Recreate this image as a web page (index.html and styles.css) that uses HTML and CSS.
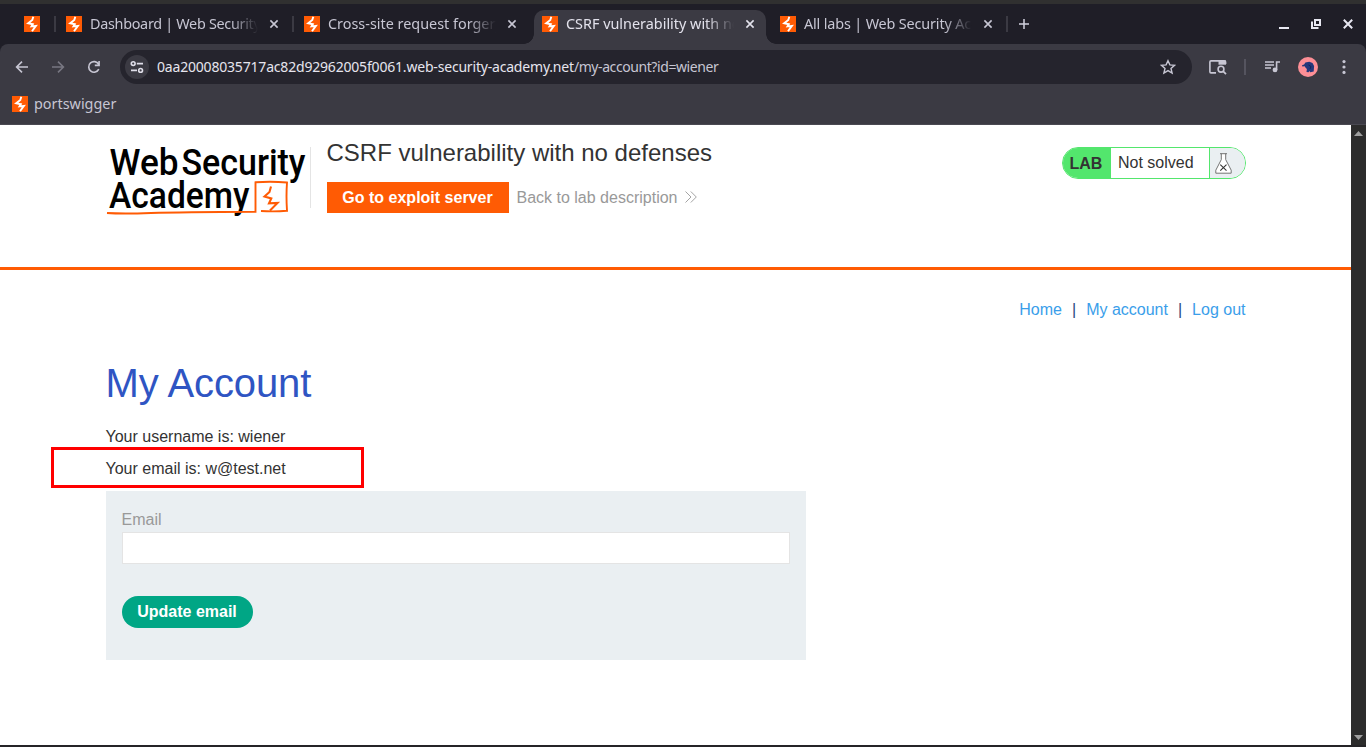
FILE: index.html
```html
<!DOCTYPE html>
<html lang="en">
<head>
<meta charset="utf-8">
<title>CSRF vulnerability with no defenses</title>
<link rel="stylesheet" href="styles.css">
</head>
<body>
<svg width="0" height="0" class="defs" aria-hidden="true">
  <symbol id="fav" viewBox="0 0 16 16"><rect width="16" height="16" fill="#ff5b04"/><path d="M9.300 .8 8.300 4 4.200 7.200 8.800 8.200 7.500 10.400 11.900 9.900 8 15.300" fill="none" stroke="#fff" stroke-width="1.900"/></symbol>
  <symbol id="close" viewBox="0 0 10 10"><path d="M1.4 1.4 8.6 8.6M8.6 1.4 1.4 8.6" stroke="currentColor" stroke-width="1.6" fill="none"/></symbol>
</svg>
<div class="desktop-strip"></div>
<div class="tabstrip">
  <div class="tab pinned"><svg class="fav"><use href="#fav"/></svg></div>
  <div class="tab"><svg class="fav"><use href="#fav"/></svg><span class="title t1">Dashboard | Web Security</span><svg class="close"><use href="#close"/></svg></div>
  <div class="tab nosep"><svg class="fav"><use href="#fav"/></svg><span class="title t2">Cross-site request forgery</span><svg class="close"><use href="#close"/></svg></div>
  <div class="tab active"><svg class="fav"><use href="#fav"/></svg><span class="title t3">CSRF vulnerability with no defenses</span><svg class="close"><use href="#close"/></svg></div>
  <div class="tab"><svg class="fav"><use href="#fav"/></svg><span class="title t4">All labs | Web Security Academy</span><svg class="close"><use href="#close"/></svg></div>
  <svg class="plus" viewBox="0 0 10 10"><path d="M5 0V10M0 5H10" stroke="#d2d1de" stroke-width="1.5"/></svg>
  <div class="window-buttons">
    <svg viewBox="0 0 10 10"><path d="M0 9H10" stroke="#e8e8f2" stroke-width="2"/></svg>
    <svg viewBox="0 0 10 10"><path d="M4 1H9V6H4ZM1 2.5V9H7.5" fill="none" stroke="#e8e8f2" stroke-width="2"/></svg>
    <svg viewBox="0 0 10 10"><path d="M.8.8 9.2 9.2M9.2.8.8 9.2" stroke="#e8e8f2" stroke-width="2"/></svg>
  </div>
</div>
<div class="toolbar-back">
<div class="toolbar-wrap">
  <div class="toolbar">
    <svg class="nav" viewBox="0 0 16 16"><path d="M14 8H2.8M8 2.6 2.6 8 8 13.4" fill="none" stroke="#c7c6d3" stroke-width="1.6"/></svg>
    <svg class="nav" viewBox="0 0 16 16"><path d="M2 8H13.2M8 2.6 13.4 8 8 13.4" fill="none" stroke="#787782" stroke-width="1.6"/></svg>
    <svg class="nav" viewBox="0 0 16 16"><path d="M12.8 10.2A5.3 5.3 0 1 1 12.6 5.2M13.1 2V6.4H8.8" fill="none" stroke="#c7c6d3" stroke-width="1.6"/></svg>
    <div class="omnibox">
      <span class="site"><svg viewBox="0 0 14 14"><g fill="none" stroke="#dfdee9" stroke-width="1.6"><circle cx="3.2" cy="3.6" r="1.9"/><path d="M6.8 3.6H13M1 10.4H7"/><circle cx="10.6" cy="10.4" r="1.9"/></g></svg></span>
      <span class="url"><span class="host">0aa20008035717ac82d92962005f0061.web-security-academy.net</span><span class="path">/my-account?id=wiener</span></span>
      <svg class="star" viewBox="0 0 16 16"><path d="M8 1.7 9.9 5.9 14.5 6.3 11 9.4 12.1 14 8 11.6 3.9 14 5 9.4 1.5 6.3 6.1 5.9Z" fill="none" stroke="#c7c6d3" stroke-width="1.4"/></svg>
    </div>
    <svg class="lens" viewBox="0 0 18 16"><path d="M7 13.9H2Q.9 13.9.9 12.8V3Q.9 1.9 2 1.9H15.5Q16.6 1.9 16.6 3V5" fill="none" stroke="#c7c6d3" stroke-width="1.6"/><path d="M9.5 1.5H17V5.7H9.5Z" fill="#c7c6d3"/><circle cx="12" cy="10.2" r="2.9" fill="none" stroke="#c7c6d3" stroke-width="1.6"/><path d="M14 12.2 17 15.2" stroke="#c7c6d3" stroke-width="1.7"/></svg>
    <i class="divider"></i>
    <svg class="media" viewBox="0 0 16 16"><path d="M1 3H10M1 6H10M1 9H7M12.6 11V3H16" fill="none" stroke="#c7c6d3" stroke-width="1.6"/><circle cx="11" cy="10.9" r="2.4" fill="#c7c6d3"/></svg>
    <svg class="avatar" viewBox="0 0 20 20"><circle cx="10" cy="10" r="10" fill="#fd8f96"/><path d="M4 8.3 6.1 7.5 7.4 5.4 11.3 4.8 14.5 6.1 16.1 9 15.7 14.4 12.2 15.3 11.5 14 10.6 15.2 8.5 14.9 8.9 12 7.4 10.5 6.7 9.3 4.3 9.4Z" fill="#25377b"/><path d="M10.5 8 13 9.5 12 12" stroke="#182352" fill="none"/></svg>
    <svg class="dots" viewBox="0 0 4 16"><g fill="#c7c6d3"><circle cx="2" cy="2.6" r="1.6"/><circle cx="2" cy="8" r="1.6"/><circle cx="2" cy="13.4" r="1.6"/></g></svg>
  </div>
  <div class="bookmarks"><svg class="fav"><use href="#fav"/></svg><span>portswigger</span></div>
</div>
</div>
<div class="viewport">
  <main>
    <header>
      <div class="container head">
        <svg class="logo" viewBox="0 0 204 72">
          <g font-family="Roboto, sans-serif" font-weight="500" font-size="37" fill="#000">
            <text x="3.5" y="30" textLength="69" lengthAdjust="spacingAndGlyphs">Web</text>
            <text x="75.5" y="30" textLength="124" lengthAdjust="spacingAndGlyphs">Security</text>
            <text x="3" y="62.7" textLength="140.5" lengthAdjust="spacingAndGlyphs">Academy</text>
          </g>
          <path d="M1 68Q16 69 45 68T149.500 66.7V37.3Q165 36 181 37.5Q180 51 181 65.800Q168 66.800 155 66" fill="none" stroke="#ff5b04" stroke-width="1.9"/>
          <path d="M165 41.500 163.500 47 158.500 51.500 165.300 53.500 163 58.300 171.500 58 164 65.500" fill="none" stroke="#ff5b04" stroke-width="2.1"/>
        </svg>
        <div class="lab-title">
          <h2>CSRF vulnerability with no defenses</h2>
          <div class="links"><a class="exploit">Go to exploit server</a><a class="back">Back to lab description</a><svg class="chev" viewBox="0 0 12 12"><path d="M.5.5 6 6 .5 11.5M5.8.5 11.3 6 5.8 11.5" fill="none" stroke="#999" stroke-width=".9"/></svg></div>
        </div>
        <div class="status">
          <b>LAB</b><span>Not solved</span>
          <div class="flask"><svg viewBox="0 0 17 21"><path d="M5 .7H12M6.3.7V6.6L.8 17.2V20.2H16.2V17.2L10.7 6.6V.7" fill="#fff" stroke="#666" stroke-width=".9"/><path d="M5.3 11.6 11.5 17.6M11.5 11.6 5.3 17.6" stroke="#333" stroke-width="1.1"/></svg></div>
        </div>
      </div>
    </header>
    <div class="container content">
      <nav><a>Home</a><i>|</i><a>My account</a><i>|</i><a>Log out</a></nav>
      <h1>My Account</h1>
      <p>Your username is: wiener</p>
      <p class="email">Your email is: w@test.net<span class="mark"></span></p>
      <form>
        <label for="email">Email</label>
        <input id="email" type="text">
        <button type="button">Update email</button>
      </form>
    </div>
  </main>
  <div class="scrollbar"><svg viewBox="0 0 9 5"><path d="M0 5 4.5 0 9 5Z" fill="#9e9e9e"/></svg><svg viewBox="0 0 9 5"><path d="M0 0H9L4.5 5Z" fill="#9e9e9e"/></svg></div>
</div>
</body>
</html>
```
FILE: styles.css
```css
* { box-sizing: border-box; }
body { margin: 0; width: 1366px; height: 747px; overflow: hidden; background: #252427; color: #333; font: 16px/20px "Liberation Sans", Arial, sans-serif; }
svg { display: block; flex: none; }
.defs { position: absolute; }

.desktop-strip { height: 4px; background: #303030; }
.tabstrip { display: flex; height: 40px; padding-top: 6px; background: #1f1e27; font: 14.4px/28px "Noto Sans", sans-serif; color: #c7c6d3; }
.tab { position: relative; display: flex; align-items: center; width: 232px; height: 28px; margin-right: 6px; padding: 0 11px 0 8px; }
.tab::after { content: ""; position: absolute; right: -4px; top: 6px; width: 2px; height: 16px; background: #3b3a43; }
.tab.active::after, .tab.nosep::after { display: none; }
.tab.pinned { width: 36px; margin: 0 6px 0 16px; }
.tab.active { height: 34px; padding-bottom: 6px; border-radius: 10px 10px 0 0; background: #3b3a43; color: #e3e2ec; }
.tab.active::before { content: ""; position: absolute; left: -10px; right: -10px; bottom: 0; height: 10px; background: radial-gradient(circle at 0 0, transparent 9.5px, #3b3a43 10px) left / 10px 10px no-repeat, radial-gradient(circle at 100% 0, transparent 9.5px, #3b3a43 10px) right / 10px 10px no-repeat; }
.fav { width: 16px; height: 16px; }
.title { width: 168px; margin-left: 8px; overflow: hidden; white-space: nowrap; -webkit-mask-image: linear-gradient(90deg, #000 140px, transparent 168px); mask-image: linear-gradient(90deg, #000 140px, transparent 168px); }
.t1 { letter-spacing: -.3px; }
.t4 { letter-spacing: -.15px; }
.close { width: 10px; height: 10px; margin-left: 11px; }
.plus { width: 10px; height: 10px; margin: 9px 0 0 9px; }
.window-buttons { display: flex; gap: 22px; margin: 9px 13px 0 auto; }
.window-buttons svg { width: 10px; height: 10px; }

.toolbar-back { background: #1f1e27; }
.toolbar-wrap { height: 81px; background: #3b3a43; border-bottom: 1px solid #4a4952; border-radius: 8px 8px 0 0; }
.toolbar { display: flex; align-items: center; height: 46px; padding: 0 20px 0 14px; }
.nav { width: 16px; height: 16px; margin-right: 20px; }
.omnibox { display: flex; align-items: center; width: 1072px; height: 34px; margin-left: -2px; padding: 0 16px 0 5px; border-radius: 17px; background: #25242d; font: 14px/34px "Noto Sans", sans-serif; }
.site { display: flex; width: 24px; height: 24px; align-items: center; justify-content: center; border-radius: 50%; background: #3b3a43; }
.site svg { width: 14px; height: 14px; }
.url { flex: 1; margin-left: 8px; white-space: nowrap; color: #c7c6d3; }
.host { color: #e6e5ee; letter-spacing: -.19px; }
.path { letter-spacing: -.42px; }
.star { width: 16px; height: 16px; }
.lens { width: 18px; height: 16px; margin-left: 17px; }
.divider { width: 2px; height: 16px; margin: 0 18px 0 17px; background: #55545f; }
.media { width: 16px; height: 16px; }
.avatar { width: 20px; height: 20px; margin-left: 18px; }
.dots { width: 4px; height: 16px; margin-left: 24px; }
.bookmarks { display: flex; align-items: center; gap: 6px; height: 28px; padding-left: 12px; font: 14.4px/28px "Noto Sans", sans-serif; color: #c7c6d3; }

.viewport { display: flex; height: 620px; }
main { width: 1351px; background: #fff; }
.scrollbar { display: flex; flex-direction: column; justify-content: space-between; align-items: center; width: 15px; padding: 6px 0 5px; background: #2c2c2c; }
.scrollbar svg { width: 9px; height: 5px; }
.container { width: 1140px; margin: 0 auto; }
header { height: 145px; border-bottom: 3px solid #ff5b04; }
.head { display: flex; padding-top: 20px; }
.logo { width: 204px; height: 72px; }
.lab-title { height: 61px; margin-top: 2px; padding-left: 16px; border-left: 1px solid #e4e4e4; }
h2 { margin: -10px 0 14px; font-size: 24px; font-weight: 400; line-height: 31px; white-space: nowrap; }
.links { display: flex; align-items: center; line-height: 31px; }
.exploit { width: 182px; height: 31px; text-align: center; background: #ff5b04; color: #fff; font-weight: 700; }
.back { margin-left: 8px; color: #999; }
.chev { width: 12px; height: 12px; margin: -2px 0 0 8px; }
.status { display: flex; width: 184px; height: 32px; margin: 2px 0 0 auto; border: 1px solid #53e66d; border-radius: 16px; overflow: hidden; line-height: 30px; }
.status b { width: 48px; padding-left: 7px; background: #53e66d; line-height: 31px; }
.status span { width: 98px; padding-left: 7.5px; }
.flask { flex: 1; padding: 5px 0 0 5px; border-left: 1px solid #53e66d; background: #eaeff2; }
.flask svg { width: 17px; height: 21px; }

nav { display: flex; justify-content: flex-end; padding-top: 30px; }
nav a { color: #3a9eea; }
nav i { margin: 0 10px; font-style: normal; color: #2a4a7c; }
h1 { margin: 40px 0 0; font-size: 40px; font-weight: 400; line-height: 46px; letter-spacing: -.1px; color: #2f55c3; }
p { margin: 21px 0 0; }
.email { position: relative; margin-top: 12px; }
.mark { position: absolute; left: -55px; top: -12px; width: 313px; height: 41px; border: 3px solid #f00; }
form { width: 700px; height: 169px; margin-top: 12px; padding: 19px 16px; background: #eaeff2; }
label { display: block; line-height: 20px; color: #999; }
input { display: block; width: 668px; height: 32px; margin: 2px 0 32px; border: 1px solid #e4e4e4; background: #fff; }
button { display: block; width: 131px; height: 32px; padding: 0 0 1px; border: 0; border-radius: 16px; background: #00a685; color: #fff; font: 700 16px/30px "Liberation Sans", Arial, sans-serif; }
```
